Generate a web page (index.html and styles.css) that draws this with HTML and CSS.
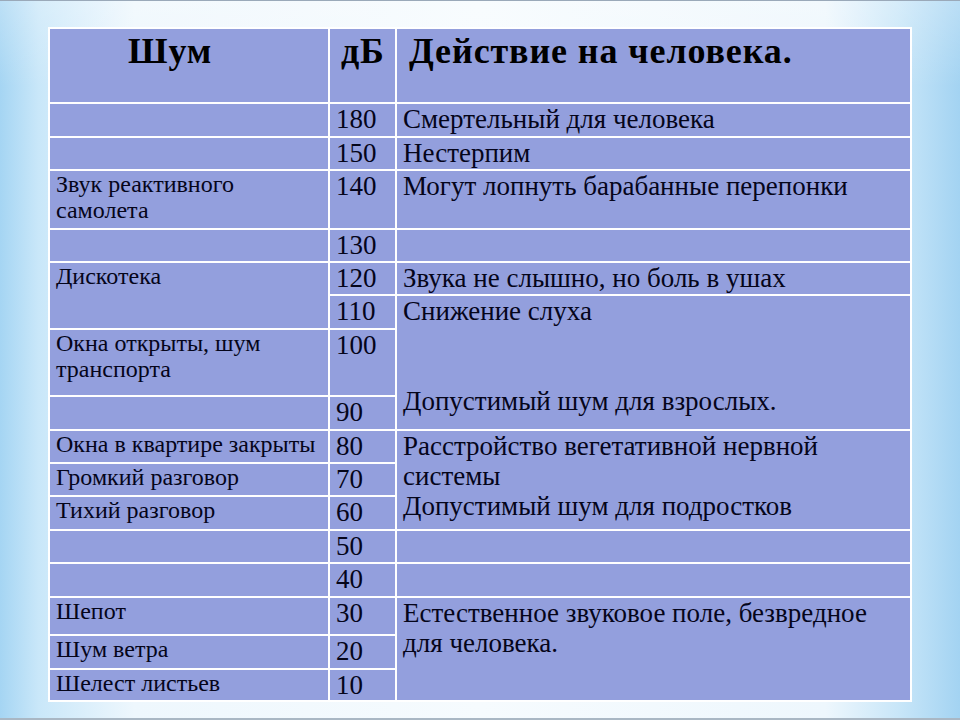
FILE: index.html
```html
<!DOCTYPE html>
<html lang="ru">
<head>
<meta charset="utf-8">
<link rel="stylesheet" href="styles.css">
</head>
<body>
<div class="slide">
<table class="noise">
  <colgroup><col class="c1"><col class="c2"><col class="c3"></colgroup>
  <tr class="r75"><th class="h-noise">Шум</th><th class="h-db">дБ</th><th class="h-act">Действие на человека.</th></tr>
  <tr class="r34"><td class="src"></td><td class="db">180</td><td class="act">Смертельный для человека</td></tr>
  <tr class="r33"><td class="src"></td><td class="db">150</td><td class="act">Нестерпим</td></tr>
  <tr class="r59"><td class="src">Звук реактивного<br>самолета</td><td class="db">140</td><td class="act">Могут лопнуть барабанные перепонки</td></tr>
  <tr class="r33"><td class="src"></td><td class="db">130</td><td class="act"></td></tr>
  <tr class="r33"><td class="src" rowspan="2">Дискотека</td><td class="db">120</td><td class="act">Звука не слышно, но боль в ушах</td></tr>
  <tr class="r34"><td class="db">110</td><td class="act" rowspan="3">Снижение слуха<br><br><br>Допустимый шум для взрослых.</td></tr>
  <tr class="r67"><td class="src">Окна открыты, шум<br>транспорта</td><td class="db">100</td></tr>
  <tr class="r34"><td class="src"></td><td class="db">90</td></tr>
  <tr class="r33"><td class="src">Окна в квартире закрыты</td><td class="db">80</td><td class="act" rowspan="3">Расстройство вегетативной нервной<br>системы<br>Допустимый шум для подростков</td></tr>
  <tr class="r33"><td class="src">Громкий разговор</td><td class="db">70</td></tr>
  <tr class="r34"><td class="src">Тихий разговор</td><td class="db">60</td></tr>
  <tr class="r33"><td class="src"></td><td class="db">50</td><td class="act"></td></tr>
  <tr class="r34"><td class="src"></td><td class="db">40</td><td class="act"></td></tr>
  <tr class="r38"><td class="src">Шепот</td><td class="db">30</td><td class="act" rowspan="3">Естественное звуковое поле, безвредное<br>для человека.</td></tr>
  <tr class="r34"><td class="src">Шум ветра</td><td class="db">20</td></tr>
  <tr class="r32"><td class="src">Шелест листьев</td><td class="db">10</td></tr>
</table>
</div>
</body>
</html>
```
FILE: styles.css
```css
html, body {
  margin: 0;
  padding: 0;
}
body {
  width: 960px;
  height: 720px;
  overflow: hidden;
}
.slide {
  box-sizing: border-box;
  width: 960px;
  height: 720px;
  padding: 27px 0 0 48px;
  border-top: 1px solid #9aa9b9;
  border-bottom: 2px solid #a9b7c4;
  background:
    linear-gradient(to bottom, rgba(255,255,255,0.25) 0%, rgba(255,255,255,0) 12%),
    linear-gradient(to right, #a5d5f3 0%, #c9e7f9 4%, #eef7fd 14%, #f6fbfe 50%, #eef7fd 86%, #c6e5f8 94%, #a3d3f2 100%);
}
.noise {
  margin-top: -1px;
  width: 864px;
  table-layout: fixed;
  border-collapse: separate;
  border-spacing: 0;
  border-top: 2px solid #ffffff;
  border-left: 2px solid #ffffff;
  background: #939fdd;
  color: #000000;
  font-family: "Liberation Serif", "Times New Roman", serif;
}
.c1 { width: 280px; }
.c2 { width: 67px; }
.c3 { width: 515px; }
.noise th, .noise td {
  box-sizing: border-box;
  border-right: 2px solid #ffffff;
  border-bottom: 2px solid #ffffff;
  vertical-align: top;
  text-align: left;
  padding: 0 6px;
  white-space: nowrap;
  overflow: hidden;
}
.noise th {
  font-weight: bold;
  font-size: 36px;
  line-height: 40px;
  letter-spacing: 0.9px;
  padding-top: 2px;
}
.noise th.h-noise { padding-left: 78px; }
.noise th.h-db { padding-left: 11px; }
.noise th.h-act { padding-left: 12px; }
.src {
  font-size: 24px;
  line-height: 26px;
  color: #05051a;
}
.db, .act {
  font-size: 27px;
  line-height: 30px;
  color: #05051a;
}
.r75 > * { height: 75px; }
.r67 > * { height: 67px; }
.r59 > * { height: 59px; }
.r38 > * { height: 38px; }
.r34 > * { height: 34px; }
.r33 > * { height: 33px; }
.r32 > * { height: 32px; }
```
